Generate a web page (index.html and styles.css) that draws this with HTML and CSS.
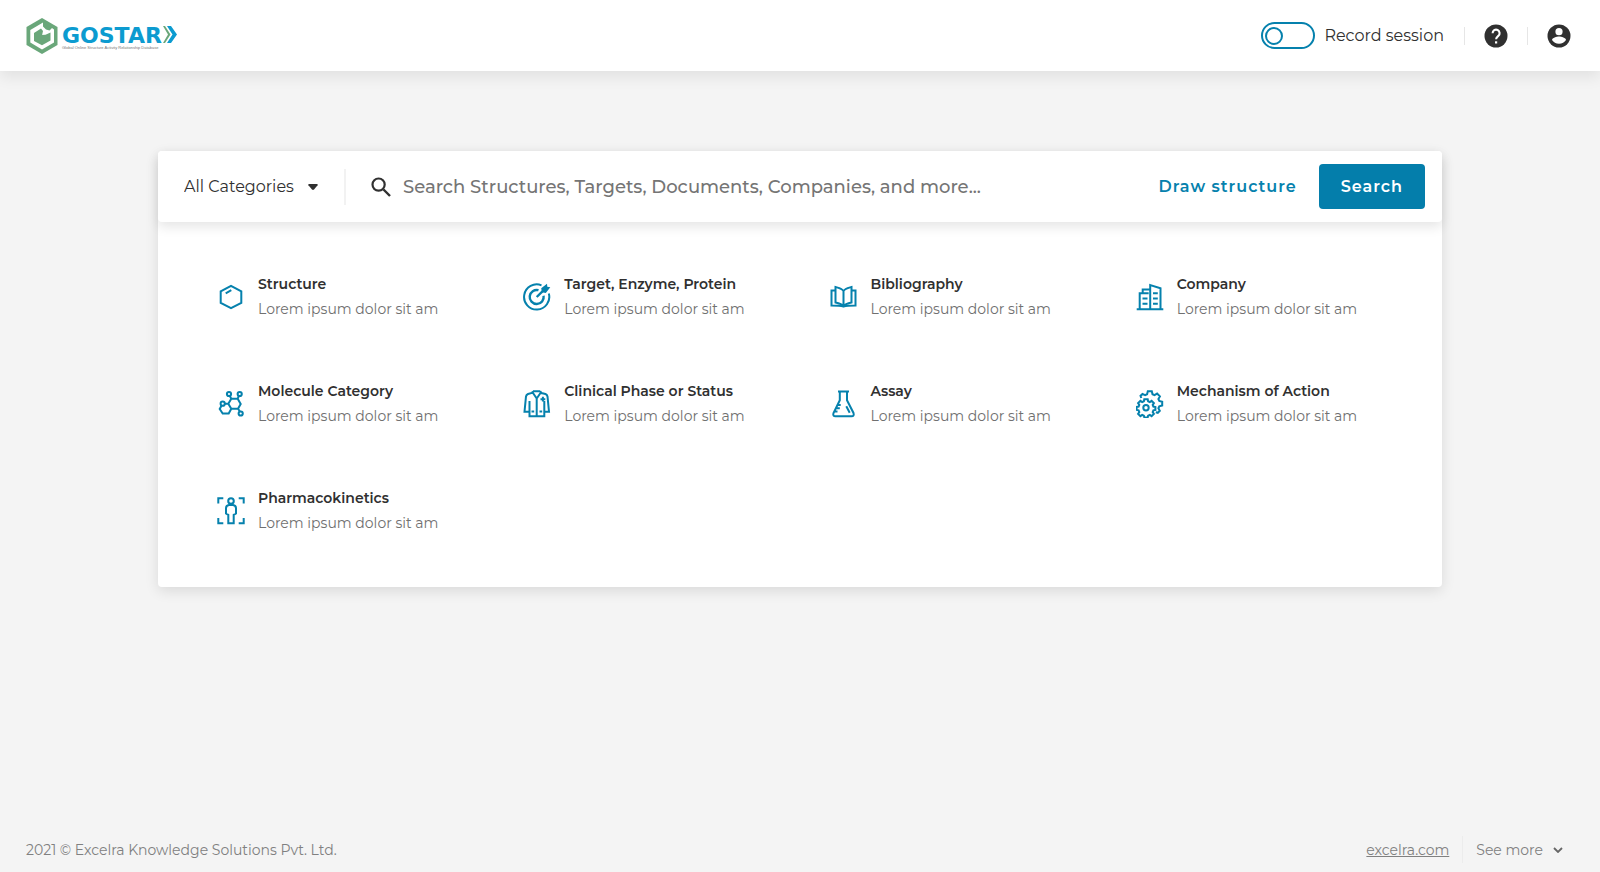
FILE: index.html
```html
<!DOCTYPE html>
<html lang="en">
<head>
<meta charset="utf-8">
<meta name="viewport" content="width=device-width, initial-scale=1">
<title>GOSTAR</title>
<link rel="stylesheet" href="styles.css">
</head>
<body class="page">
<header class="header">
  <a class="logo" href="#">
    <svg class="logo-mark" viewBox="0 0 32 36" aria-hidden="true">
      <path fill="#6aa77a" d="M16 0 31.500 9V27L16 36 .5 27V9z"/>
      <path fill="#fff" d="M17 4.500 4.300 12v12.500L16 31.500 28 24.500V11.500L26 10l-2.500 2.500L20 11.500l-3-3z"/>
      <path fill="#6aa77a" d="M15 10.500 8 15v8l8 4.300 8.500-4.800V14.500l-5 2.200-4 .3-2.500 2v3l3 1.200 3.500-2 .5-2.200-3 .5-1-2L17 13z"/>
    </svg>
    <span class="logo-words">
      <span class="logo-name">GOSTAR</span>
      <span class="logo-tag">Global Online Structure Activity Relationship Database</span>
    </span>
    <svg class="logo-arrows" viewBox="0 0 14 17" aria-hidden="true">
      <path fill="#6aa77a" d="M0 0h2l5.500 8.500L2 17H0l5-8.500z"/>
      <path fill="#0c9bd0" d="M4 0h4l6 8.500L8 17H4l5.500-8.500z"/>
    </svg>
  </a>
  <div class="header-tools">
    <label class="record"><input class="toggle" type="checkbox">Record session</label>
    <span class="rule"></span>
    <button class="icon-button" type="button" aria-label="Help">
      <svg viewBox="0 0 24 24"><circle cx="12" cy="12" r="11.500" fill="#303030"/><path d="M8.600 9.200a3.500 3.500 0 1 1 5.700 2.700c-1.400 1.100-2.200 1.600-2.200 3.400" fill="none" stroke="#fff" stroke-width="2.100"/><path fill="#fff" d="M11 17.300h2.200v2.200H11z"/></svg>
    </button>
    <span class="rule"></span>
    <button class="icon-button" type="button" aria-label="Account">
      <svg viewBox="0 0 24 24"><circle cx="12" cy="12" r="11.500" fill="#303030"/><circle cx="12" cy="7.700" r="3.600" fill="#fff"/><path fill="#fff" d="M5 16c0-2.300 4.700-3.600 7-3.600s7 1.300 7 3.600c-1.500 2.300-4 3.800-7 3.800S6.500 18.300 5 16z"/></svg>
    </button>
  </div>
</header>

<main class="main">
  <section class="panel">
    <form class="search">
      <div class="category">
        <select class="category-select" aria-label="Category"><option>All Categories</option></select>
        <svg class="caret" viewBox="0 0 10 6" aria-hidden="true"><path fill="#303030" d="M1 0h8q1 .3.600 1.200L6 5.500q-1 .8-2 0L.4 1.200Q0 .3 1 0z"/></svg>
      </div>
      <svg class="search-icon" viewBox="0 0 20 20" aria-hidden="true"><path d="M12.500 12.500 19 19" fill="none" stroke="#303030" stroke-width="2.400"/><circle cx="7.600" cy="7.600" r="6.100" fill="none" stroke="#303030" stroke-width="2.200"/></svg>
      <input class="search-input" type="text" aria-label="Search" placeholder="Search Structures, Targets, Documents, Companies, and more...">
      <button class="draw" type="button">Draw structure</button>
      <button class="submit" type="submit">Search</button>
    </form>
    <div class="grid">
      <a class="item" href="#">
        <svg class="icon" viewBox="0 0 28 28"><path d="M14 2.800 24.300 8.300v11.500L14 25.200 3.700 19.800V8.300zM8.700 10.300 14.300 7.200"/></svg>
        <span class="item-text"><strong class="item-title">Structure</strong><span>Lorem ipsum dolor sit am</span></span>
      </a>
      <a class="item" href="#">
        <svg class="icon" viewBox="0 0 28 28"><path d="M18.500 2.300A12.600 12.600 0 1 0 25.800 10.500"/><path stroke-width="2.400" d="M15.500 7.200A7 7 0 1 0 20.600 12.800"/><path stroke-width="2.400" d="M13.700 14 21 6.800"/><path class="solid" d="M18.200 5.300 24 .8l.3 3 3 .4-4.500 5.800-3.800-.7z"/></svg>
        <span class="item-text"><strong class="item-title">Target, Enzyme, Protein</strong><span>Lorem ipsum dolor sit am</span></span>
      </a>
      <a class="item" href="#">
        <svg class="icon" viewBox="0 0 28 28"><path d="M13.500 8C12 5.500 9 5 5.500 4v15.500c3.500.7 6.500 1.500 8 3.500 1.500-2 4.500-2.800 8-3.500V4c-3.500 1-6.500 1.500-8 4zV23M5.500 7.500H1.500v15c4 0 8.500 0 12 1 3.500-1 8-1 12-1v-15h-4"/></svg>
        <span class="item-text"><strong class="item-title">Bibliography</strong><span>Lorem ipsum dolor sit am</span></span>
      </a>
      <a class="item" href="#">
        <svg class="icon" viewBox="0 0 28 28"><path d="M.7 26.300h26.600M3.700 26V10.300h9M6.700 10V6.500h6.500M14.200 26V2l10.300 3.200V26M6.500 15.400h5M6.500 20.800h5M17 10.200h4.800M17 15.400h4.800M17 20.800h4.800"/></svg>
        <span class="item-text"><strong class="item-title">Company</strong><span>Lorem ipsum dolor sit am</span></span>
      </a>
      <a class="item" href="#">
        <svg class="icon" viewBox="0 0 28 28"><path d="M14.300 8.700h6.400l3 5.200-2.700 4.800h-6.700l-3-5zM11.300 13.700H8M4.500 15.800 2.700 19l3 4.500h6l2.600-4.800M12.800 6l1.500 2.700M21.900 6l-1.200 2.700M21 18.700l1.800 2.600"/><circle cx="12" cy="4" r="2.100"/><circle cx="22.700" cy="4" r="2.100"/><circle cx="5.700" cy="13.700" r="2.100"/><circle cx="23.700" cy="23.500" r="2.100"/></svg>
        <span class="item-text"><strong class="item-title">Molecule Category</strong><span>Lorem ipsum dolor sit am</span></span>
      </a>
      <a class="item" href="#">
        <svg class="icon" viewBox="0 0 28 28"><path d="M10 1.300h7.300M10 1.300 8.800 3 5 4Q3.300 4.600 3 6.500L1.500 21.700h4.300M17.300 1.300 18.500 3l4 1q1.700.6 2 2.500L26 21.700h-4.300M6.500 11v15.300h14.800V11M9.500 2.300 13.700 8.500 18 2.300M13.700 8.500v17.800M8.500 21.500h2.700M16.500 21.500h2.700M17.500 9.200h4.800M19.900 6.800v4.800"/></svg>
        <span class="item-text"><strong class="item-title">Clinical Phase or Status</strong><span>Lorem ipsum dolor sit am</span></span>
      </a>
      <a class="item" href="#">
        <svg class="icon" viewBox="0 0 28 28"><path d="M8 1.500h11M9.800 1.500v8.700L3.500 23q-1 3.200 2 3.300h16q3-.1 2-3.300L17 10.200V1.500M7.500 15h3.200M6 18.200h3.800M4.500 21.500h3M16.300 16.200l3.400 6.500"/></svg>
        <span class="item-text"><strong class="item-title">Assay</strong><span>Lorem ipsum dolor sit am</span></span>
      </a>
      <a class="item" href="#">
        <svg class="icon" viewBox="0 0 28 28"><circle cx="10" cy="17.800" r="2.700"/><path d="M8.300 9.300h3.400l.4 2 1.700.7 1.800-1.200 2.300 2.300-1.200 1.800.7 1.700 2 .4v2.900l-2 .5-.7 1.700 1.200 1.800-2.300 2.300-1.800-1.200-1.700.7-.4 1.700H8.300l-.4-1.700-1.700-.7-1.800 1.200-2.300-2.300 1.200-1.800-.7-1.700-2-.5V17l2-.4.7-1.700-1.200-1.800 2.300-2.300L6.200 12l1.700-.7z"/><path d="M5.300 8 4.500 5.800l2-1.900 2.600 1.200 2-.9.700-2.900h4l.7 2.900 2 .9 2.600-1.500 2.800 2.800-1.500 2.600.9 2 2.900.7v3.800l-2.900.8-.9 2 1.400 2.500-2 2-2-.6"/></svg>
        <span class="item-text"><strong class="item-title">Mechanism of Action</strong><span>Lorem ipsum dolor sit am</span></span>
      </a>
      <a class="item" href="#">
        <svg class="icon" viewBox="0 0 28 28"><path d="M1.300 6.500V1.300h5M21.700 1.300h5v5.200M26.700 21v5.300h-5M6.300 26.300h-5V21"/><circle cx="14" cy="4" r="2.800"/><path d="M12 8h4q3 .3 3 3.300v5.200l-2.300 1.300v8.500h-5.400v-8.500L9 16.500v-5.200Q9 8.300 12 8z"/></svg>
        <span class="item-text"><strong class="item-title">Pharmacokinetics</strong><span>Lorem ipsum dolor sit am</span></span>
      </a>
    </div>
  </section>
</main>

<footer class="footer">
  <span>2021 © Excelra Knowledge Solutions Pvt. Ltd.</span>
  <div class="footer-links">
    <a class="footer-link" href="#">excelra.com</a>
    <button class="more" type="button">See more
      <svg class="chevron" viewBox="0 0 10 6" aria-hidden="true"><path d="M1 1l4 4 4-4" fill="none" stroke="#666" stroke-width="1.800"/></svg>
    </button>
  </div>
</footer>
</body>
</html>
```
FILE: styles.css
```css
*, *::before { box-sizing: border-box; }

.page {
  margin: 0;
  min-height: 100vh;
  display: flex;
  flex-direction: column;
  background: #f4f4f4;
  color: #303030;
  font-family: Montserrat, Inter, "Liberation Sans", sans-serif;
  font-size: 14px;
}

button, input, select { font: inherit; color: inherit; }
button { border: 0; background: none; padding: 0; cursor: pointer; }

.header {
  display: flex;
  align-items: center;
  justify-content: space-between;
  height: 71px;
  padding: 0 30px 0 26px;
  background: #fff;
  box-shadow: 0 6px 14px rgba(0, 0, 0, 0.08);
}

.logo { display: flex; align-items: center; text-decoration: none; }
.logo-mark { width: 32px; height: 36px; margin-right: 4px; }
.logo-words { display: flex; flex-direction: column; padding-top: 6px; }
.logo-name {
  font: bold 22px/18px "DejaVu Sans", sans-serif;
  color: #0c9bd0;
}
.logo-tag { font: 4px/6px "Liberation Sans", sans-serif; color: #777; }
.logo-arrows { width: 14px; height: 17px; margin: 0 0 2px 1px; }

.header-tools { display: flex; align-items: center; gap: 20px; }
.record { display: flex; align-items: center; gap: 9px; font-size: 16px; }
.toggle {
  appearance: none;
  display: flex;
  align-items: center;
  width: 54px;
  height: 27px;
  margin: 0;
  padding: 0 2px;
  border: 2px solid #0581ad;
  border-radius: 14px;
}
.toggle::before {
  content: "";
  width: 18px;
  height: 18px;
  border: 2px solid #0581ad;
  border-radius: 50%;
}
.toggle:checked { justify-content: flex-end; }
.rule { width: 1px; height: 18px; background: #e6e6e6; }
.icon-button { width: 24px; height: 24px; margin: 0 -1px; }
.icon-button svg { display: block; }

.main { flex: 1; padding: 80px 158px; }
.panel {
  background: #fff;
  border-radius: 4px;
  box-shadow: 0 4px 14px rgba(0, 0, 0, 0.11);
}

.search {
  display: flex;
  align-items: center;
  height: 71px;
  padding: 0 17px 0 26px;
  border-radius: 4px;
  background: #fff;
  box-shadow: 0 5px 12px rgba(0, 0, 0, 0.1);
}
.category {
  display: flex;
  align-items: center;
  height: 36px;
  padding-right: 26px;
  border-right: 2px solid #f2f2f2;
}
.category-select {
  appearance: none;
  border: 0;
  background: none;
  padding: 0 24px 0 0;
  margin-right: -10px;
  font-size: 16px;
}
.caret { width: 10px; height: 6px; pointer-events: none; }
.search-icon { flex: none; width: 20px; height: 20px; margin: 0 12px 0 25px; }
.search-input {
  flex: 1;
  min-width: 0;
  height: 44px;
  padding: 0;
  border: 0;
  outline: 0;
  font-size: 18px;
  font-weight: 500;
}
.search-input::placeholder { color: #757575; opacity: 1; }
.draw, .submit { font-size: 16px; font-weight: 600; letter-spacing: 1px; }
.draw { margin: 0 22px; color: #0581ad; }
.submit {
  height: 45px;
  padding: 0 22px;
  border-radius: 4px;
  background: #047eab;
  color: #fff;
}

.grid {
  display: grid;
  grid-template-columns: repeat(4, 1fr);
  row-gap: 57px;
  padding: 50px 0 51px 59px;
}
.item {
  display: flex;
  align-items: center;
  gap: 13px;
  color: #707070;
  line-height: 25px;
  text-decoration: none;
}
.item-text { display: flex; flex-direction: column; }
.item-title { font-weight: 600; color: #303030; }
.icon {
  flex: none;
  width: 28px;
  height: 28px;
  fill: none;
  stroke: #0581ad;
  stroke-width: 2;
}
.solid { fill: #0581ad; stroke: none; }

.footer {
  display: flex;
  align-items: center;
  justify-content: space-between;
  padding: 0 37px 9px 26px;
  color: #808080;
}
.footer-links { display: flex; align-items: center; gap: 13px; }
.footer-link { color: inherit; }
.more {
  display: flex;
  align-items: center;
  gap: 10px;
  height: 27px;
  padding-left: 13px;
  border-left: 1px solid #ececec;
}
.chevron { width: 10px; height: 6px; }
```
